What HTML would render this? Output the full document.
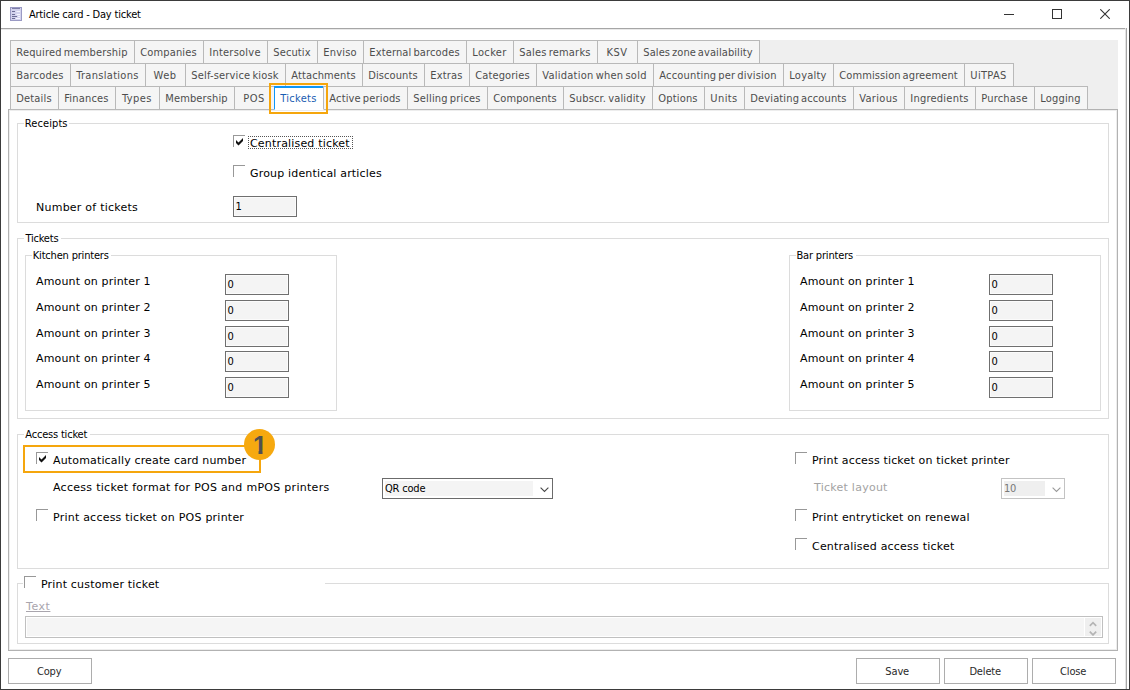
<!DOCTYPE html>
<html><head><meta charset="utf-8"><title>Article card - Day ticket</title>
<style>
html,body{margin:0;padding:0;}
body{width:1130px;height:690px;position:relative;overflow:hidden;background:#fff;font-family:"DejaVu Sans Condensed","Liberation Sans",sans-serif;font-size:11px;color:#000;}
div{box-sizing:border-box}
#win{position:absolute;left:0;top:0;width:1130px;height:690px;border:1px solid #3b3b3b;}
#frameh{position:absolute;left:1px;top:28px;width:1126px;height:1px;background:#a6a6a6;box-shadow:0 1px 0 #e9e9e9}
#framev{position:absolute;left:1126px;top:28px;width:1px;height:661px;background:#a6a6a6;box-shadow:-1px 0 0 #e3e3e3}
#icon{position:absolute;left:10px;top:7px;width:12px;height:14px}
.wb{position:absolute}
#strip{position:absolute;left:10px;top:40px;width:1108px;height:70px;background:#efefef}
.tab{position:absolute;height:24px;border:1px solid #b9b9b9;background:#f5f5f5;color:#4d4d4d;text-align:center;line-height:13px;padding-top:5px;padding-right:1px;white-space:pre;letter-spacing:0.15px;word-spacing:-1.3px}
.tab.act{background:#fff;color:#1a5db2;border-left-color:#0d96f8;border-bottom-color:#fff;z-index:3}
.tab.act:before{content:"";position:absolute;left:-1px;top:-1px;right:0px;height:2px;background:#0d96f8}
#panel{position:absolute;left:8px;top:109px;width:1110px;height:542px;border:1px solid #b2b2b2;background:#fff;box-shadow:inset 0 0 0 1px #ededed}
.grp{position:absolute;border:1px solid #dcdcdc}
.leg{position:absolute;height:12px;background:#fff}
.t{position:absolute;line-height:13px;height:13px;white-space:pre;font-family:"DejaVu Sans Condensed","Liberation Sans",sans-serif}
.v{position:absolute;line-height:13px;height:13px;white-space:pre;font-family:"DejaVu Sans","Liberation Sans",sans-serif}
.cb{position:absolute;width:12px;height:12px;border-left:1px solid #989898;border-top:1px solid #989898;background:#fff}
.cb svg{position:absolute;left:-1px;top:-1px}
.inp{position:absolute;height:21px;border:1px solid #6f6f6f;background:#f4f4f4;box-shadow:inset 0 0 0 1px #fbfbfb}
.inp span{position:absolute;left:1.4px;top:3px;line-height:13px}
.focus{position:absolute;border:1px dotted #555}
.hl{position:absolute;border:2px solid #f5a60d}
.badge{position:absolute;left:244px;top:429px;width:31px;height:31px;border-radius:50%;background:#f6a90f;z-index:5}
.badge span{position:absolute;left:9px;width:14px;top:4px;height:25px;font:bold 25px/25px "Liberation Sans",sans-serif;color:#505050;clip-path:polygon(0 0,14px 0,14px 17.4px,9.55px 17.4px,9.55px 25px,5.55px 25px,5.55px 17.4px,0 17.4px)}
.combo{position:absolute;height:21px;border:1px solid #6b6b6b;background:#fff}
.combo .cin{position:absolute;left:2px;top:2px;height:15px;background:#f4f4f4}
.combo span{position:absolute;left:2px;top:3px;line-height:13px;letter-spacing:-0.2px}
.combo .chev{position:absolute;top:8px}
.combo.dis{border-color:#c3c3c3;color:#787878}
.combo.dis .cin{background:#efefef}
.ta{position:absolute;border:1px solid #c0c0c0;background:#fff}
.tafill{position:absolute;left:1px;top:1px;width:1057px;height:18px;background:#f5f5f5}
.tasb{position:absolute;left:1059px;top:1px;width:16px;height:18px;background:#efefef}
.btn{position:absolute;top:658px;width:84px;height:26px;border:1px solid #adadad;background:#fff;text-align:center;line-height:13px;padding-top:6px;padding-right:1.6px;color:#2a2a2a;letter-spacing:-0.15px}
#hltab{position:absolute;left:269px;top:83px;width:59px;height:31px;border:2px solid #f5a60d;z-index:6}
</style></head><body>
<div id="win"></div>
<div id="frameh"></div><div id="framev"></div>
<svg id="icon" viewBox="0 0 12 14"><rect x="0.5" y="0.5" width="11" height="13" fill="#d3d3ee" stroke="#9a9ac4"/><path d="M2 1.5H10" stroke="#7d7da8" stroke-width="1"/><path d="M2 4.5H5M2 7.5H5M2 9.5H7M2 11.5H5" stroke="#6d6d96" stroke-width="1"/><path d="M6.5 4.5H10M6.5 7.5H10M8 9.5H10M6 11.5H10" stroke="#f4f4ff" stroke-width="1"/></svg>
<div class="t" style="left:28.92px;top:8px;letter-spacing:-0.185px;">Article card - Day ticket</div>
<svg class="wb" style="left:1004px;top:9px" width="10" height="10" viewBox="0 0 10 10"><path d="M0 5.5H10" stroke="#333" stroke-width="1"/></svg>
<svg class="wb" style="left:1052px;top:9px" width="10" height="10" viewBox="0 0 10 10"><rect x="0.5" y="0.5" width="9" height="9" fill="none" stroke="#333" stroke-width="1"/></svg>
<svg class="wb" style="left:1100px;top:9px" width="10" height="10" viewBox="0 0 10 10"><path d="M0.3 0.3L9.7 9.7M9.7 0.3L0.3 9.7" stroke="#333" stroke-width="1.1"/></svg>
<div id="strip"></div>
<div id="panel"></div>
<div class="tab" style="left:10px;top:40px;width:125px;letter-spacing:0.17px">Required membership</div>
<div class="tab" style="left:134px;top:40px;width:70px;letter-spacing:0.13px">Companies</div>
<div class="tab" style="left:203px;top:40px;width:65px;letter-spacing:0.23px">Intersolve</div>
<div class="tab" style="left:267px;top:40px;width:51px;letter-spacing:0.12px">Secutix</div>
<div class="tab" style="left:317px;top:40px;width:47px;letter-spacing:0.18px">Enviso</div>
<div class="tab" style="left:363px;top:40px;width:104px;letter-spacing:0.14px">External barcodes</div>
<div class="tab" style="left:466px;top:40px;width:48px;letter-spacing:0.35px">Locker</div>
<div class="tab" style="left:513px;top:40px;width:85px;letter-spacing:0.20px">Sales remarks</div>
<div class="tab" style="left:597px;top:40px;width:41px;letter-spacing:0.45px">KSV</div>
<div class="tab" style="left:637px;top:40px;width:123px;letter-spacing:0.08px">Sales zone availability</div>
<div class="tab" style="left:10px;top:63px;width:61px;letter-spacing:0.21px">Barcodes</div>
<div class="tab" style="left:70px;top:63px;width:76px;letter-spacing:0.29px">Translations</div>
<div class="tab" style="left:145px;top:63px;width:41px;letter-spacing:0.45px">Web</div>
<div class="tab" style="left:185px;top:63px;width:101px;letter-spacing:0.17px">Self-service kiosk</div>
<div class="tab" style="left:285px;top:63px;width:78px;letter-spacing:0.11px">Attachments</div>
<div class="tab" style="left:362px;top:63px;width:63px;letter-spacing:0.09px">Discounts</div>
<div class="tab" style="left:424px;top:63px;width:46px;letter-spacing:0.19px">Extras</div>
<div class="tab" style="left:469px;top:63px;width:68px;letter-spacing:0.10px">Categories</div>
<div class="tab" style="left:536px;top:63px;width:118px;letter-spacing:0.25px">Validation when sold</div>
<div class="tab" style="left:653px;top:63px;width:131px;letter-spacing:0.18px">Accounting per division</div>
<div class="tab" style="left:783px;top:63px;width:51px;letter-spacing:0.23px">Loyalty</div>
<div class="tab" style="left:833px;top:63px;width:132px;letter-spacing:0.10px">Commission agreement</div>
<div class="tab" style="left:964px;top:63px;width:50px;letter-spacing:0.34px">UiTPAS</div>
<div class="tab" style="left:10px;top:86px;width:49px;letter-spacing:0.16px">Details</div>
<div class="tab" style="left:58px;top:86px;width:58px;letter-spacing:0.18px">Finances</div>
<div class="tab" style="left:115px;top:86px;width:45px;letter-spacing:0.45px">Types</div>
<div class="tab" style="left:159px;top:86px;width:76px;letter-spacing:0.12px">Membership</div>
<div class="tab" style="left:234px;top:86px;width:41px;letter-spacing:0.45px">POS</div>
<div class="tab act" style="left:274px;top:86px;width:50px;letter-spacing:0.29px">Tickets</div>
<div class="tab" style="left:323px;top:86px;width:85px;letter-spacing:0.16px">Active periods</div>
<div class="tab" style="left:407px;top:86px;width:81px;letter-spacing:0.18px">Selling prices</div>
<div class="tab" style="left:487px;top:86px;width:77px;letter-spacing:0.08px">Components</div>
<div class="tab" style="left:563px;top:86px;width:90px;letter-spacing:0.17px">Subscr. validity</div>
<div class="tab" style="left:652px;top:86px;width:53px;letter-spacing:0.17px">Options</div>
<div class="tab" style="left:704px;top:86px;width:41px;letter-spacing:0.42px">Units</div>
<div class="tab" style="left:744px;top:86px;width:110px;letter-spacing:0.13px">Deviating accounts</div>
<div class="tab" style="left:853px;top:86px;width:52px;letter-spacing:0.30px">Various</div>
<div class="tab" style="left:904px;top:86px;width:72px;letter-spacing:0.23px">Ingredients</div>
<div class="tab" style="left:975px;top:86px;width:60px;letter-spacing:0.19px">Purchase</div>
<div class="tab" style="left:1034px;top:86px;width:54px;letter-spacing:0.16px">Logging</div>
<div id="hltab"></div>
<div class="grp" style="left:17px;top:123px;width:1092px;height:100px"></div><div class="leg" style="left:24px;top:117px;width:45px"></div><div class="t" style="left:24.73px;top:117px;letter-spacing:0.104px;">Receipts</div>
<div class="cb" style="left:233px;top:135px"><svg style="top:-1px" width="12" height="12" viewBox="0 0 12 12"><path d="M3 5 L5.5 7.5 L10 3 L10 6 L5.5 10.5 L3 8 Z" fill="#111"/></svg></div>
<div class="v" style="left:250.00px;top:137px;letter-spacing:0.175px;">Centralised ticket</div>
<div class="focus" style="left:248px;top:136px;width:105px;height:13px"></div>
<div class="cb" style="left:233px;top:165px"></div>
<div class="v" style="left:250.00px;top:167px;letter-spacing:0.172px;">Group identical articles</div>
<div class="v" style="left:36.00px;top:201px;letter-spacing:0.241px;">Number of tickets</div>
<div class="inp" style="left:233px;top:196px;width:64px"><span>1</span></div>
<div class="grp" style="left:17px;top:238px;width:1092px;height:181px"></div><div class="leg" style="left:24px;top:232px;width:37px"></div><div class="t" style="left:25.43px;top:232px;letter-spacing:-0.200px;">Tickets</div>
<div class="grp" style="left:25px;top:255px;width:312px;height:156px"></div><div class="leg" style="left:32px;top:249px;width:79px"></div><div class="t" style="left:32.83px;top:249px;letter-spacing:-0.192px;">Kitchen printers</div>
<div class="grp" style="left:789px;top:255px;width:312px;height:156px"></div><div class="leg" style="left:796px;top:249px;width:60px"></div><div class="t" style="left:796.43px;top:249px;letter-spacing:-0.164px;">Bar printers</div>
<div class="v" style="left:36.00px;top:275px;letter-spacing:0.170px;">Amount on printer 1</div>
<div class="inp" style="left:225px;top:274px;width:64px"><span>0</span></div>
<div class="v" style="left:800.00px;top:275px;letter-spacing:0.170px;">Amount on printer 1</div>
<div class="inp" style="left:989px;top:274px;width:64px"><span>0</span></div>
<div class="v" style="left:36.00px;top:301px;letter-spacing:0.170px;">Amount on printer 2</div>
<div class="inp" style="left:225px;top:300px;width:64px"><span>0</span></div>
<div class="v" style="left:800.00px;top:301px;letter-spacing:0.170px;">Amount on printer 2</div>
<div class="inp" style="left:989px;top:300px;width:64px"><span>0</span></div>
<div class="v" style="left:36.00px;top:327px;letter-spacing:0.170px;">Amount on printer 3</div>
<div class="inp" style="left:225px;top:326px;width:64px"><span>0</span></div>
<div class="v" style="left:800.00px;top:327px;letter-spacing:0.170px;">Amount on printer 3</div>
<div class="inp" style="left:989px;top:326px;width:64px"><span>0</span></div>
<div class="v" style="left:36.00px;top:352px;letter-spacing:0.170px;">Amount on printer 4</div>
<div class="inp" style="left:225px;top:351px;width:64px"><span>0</span></div>
<div class="v" style="left:800.00px;top:352px;letter-spacing:0.170px;">Amount on printer 4</div>
<div class="inp" style="left:989px;top:351px;width:64px"><span>0</span></div>
<div class="v" style="left:36.00px;top:378px;letter-spacing:0.170px;">Amount on printer 5</div>
<div class="inp" style="left:225px;top:377px;width:64px"><span>0</span></div>
<div class="v" style="left:800.00px;top:378px;letter-spacing:0.170px;">Amount on printer 5</div>
<div class="inp" style="left:989px;top:377px;width:64px"><span>0</span></div>
<div class="grp" style="left:17px;top:434px;width:1092px;height:135px"></div><div class="leg" style="left:24px;top:428px;width:66px"></div><div class="t" style="left:25.32px;top:428px;letter-spacing:-0.200px;">Access ticket</div>
<div class="hl" style="left:23px;top:445px;width:238px;height:28px"></div>
<div class="cb" style="left:36px;top:452px"><svg style="top:-1.5px" width="12" height="12" viewBox="0 0 12 12"><path d="M3 5 L5.5 7.5 L10 3 L10 6 L5.5 10.5 L3 8 Z" fill="#111"/></svg></div>
<div class="v" style="left:53.00px;top:454px;letter-spacing:0.155px;">Automatically create card number</div>
<div class="v" style="left:53.00px;top:481px;letter-spacing:0.288px;">Access ticket format for POS and mPOS printers</div>
<div class="cb" style="left:36px;top:509px"></div>
<div class="v" style="left:53.00px;top:511px;letter-spacing:0.226px;">Print access ticket on POS printer</div>
<div class="combo" style="left:382px;top:478px;width:171px"><div class="cin" style="width:148px"></div><span>QR code</span><svg class="chev" style="left:157px" width="9" height="6" viewBox="0 0 9 6"><path d="M0.6 0.6 L4.5 4.5 L8.4 0.6" fill="none" stroke="#4a4a4a" stroke-width="1.1"/></svg></div>
<div class="badge"><span>1</span></div>
<div class="cb" style="left:795px;top:452px"></div>
<div class="v" style="left:812.00px;top:454px;letter-spacing:0.162px;">Print access ticket on ticket printer</div>
<div class="v" style="left:814.00px;top:481px;letter-spacing:0.255px;color:#a3a3a3">Ticket layout</div>
<div class="combo dis" style="left:1001px;top:478px;width:64px"><div class="cin" style="width:41px"></div><span>10</span><svg class="chev" style="left:50px" width="9" height="6" viewBox="0 0 9 6"><path d="M0.6 0.6 L4.5 4.5 L8.4 0.6" fill="none" stroke="#9a9a9a" stroke-width="1.1"/></svg></div>
<div class="cb" style="left:795px;top:509px"></div>
<div class="v" style="left:812.00px;top:511px;letter-spacing:0.183px;">Print entryticket on renewal</div>
<div class="cb" style="left:795px;top:538px"></div>
<div class="v" style="left:812.00px;top:540px;letter-spacing:0.213px;">Centralised access ticket</div>
<div class="grp" style="left:17px;top:583px;width:1092px;height:61px"></div>
<div class="leg" style="left:23px;top:575px;width:302px;height:16px"></div>
<div class="cb" style="left:24px;top:576px"></div>
<div class="v" style="left:41.00px;top:578px;letter-spacing:0.179px;">Print customer ticket</div>
<div class="v" style="left:26.00px;top:600px;letter-spacing:0.540px;color:#a9a5ad;text-decoration:underline">Text</div>
<div class="ta" style="left:25px;top:616px;width:1078px;height:22px"><div class="tafill"></div><div class="tasb"><svg style="position:absolute;left:3px;top:2px" width="10" height="16" viewBox="0 0 10 16"><path d="M1.8 5.9 L5 2.7 L8.2 5.9 M1.8 11.7 L5 14.9 L8.2 11.7" fill="none" stroke="#b4b4b4" stroke-width="1.7"/></svg></div></div>
<div class="btn" style="left:8px">Copy</div>
<div class="btn" style="left:856px">Save</div>
<div class="btn" style="left:944px">Delete</div>
<div class="btn" style="left:1032px">Close</div>
</body></html>
